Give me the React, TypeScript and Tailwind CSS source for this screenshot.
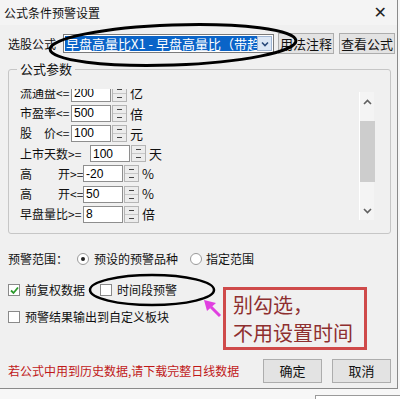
import React from "react";

const font = "font-['SimSun','Noto_Sans_CJK_SC',sans-serif]";

type Row = { label: React.ReactNode; value: string; unit: string; inputLeft: number };

const Spin = () => (
  <div className="flex flex-col w-[15px] h-[17px] border border-[#b5b5b5] bg-[#ececec]">
    <div className="flex-1 flex items-center justify-center border-b border-[#c8c8c8]">
      <div className="w-[5px] h-px bg-[#444]" />
    </div>
    <div className="flex-1 flex items-center justify-center">
      <div className="w-[5px] h-px bg-[#444]" />
    </div>
  </div>
);

const ParamRow = ({ label, value, unit, inputLeft }: Row) => (
  <div className="h-[20.2px] flex items-center">
    <div className="shrink-0 whitespace-nowrap text-[12px] text-[#111]" style={{ width: inputLeft }}>
      {label}
    </div>
    <div className="w-[40px] h-[17px] border border-[#8e8e8e] bg-white flex items-center pl-[2px] text-[12px] text-black leading-none font-['Liberation_Sans',sans-serif]">
      {value}
    </div>
    <div className="ml-[1px]">
      <Spin />
    </div>
    <span className="ml-[3px] text-[13px] text-[#111]">{unit}</span>
  </div>
);

const Check = ({ checked }: { checked?: boolean }) => (
  <div className="w-[12px] h-[12px] border border-[#8a8a8a] bg-white flex items-center justify-center">
    {checked && (
      <svg width="9" height="9" viewBox="0 0 9 9">
        <path d="M1 4.5 L3.5 7 L8 1.5" stroke="#2c9a2c" strokeWidth="1.8" fill="none" />
      </svg>
    )}
  </div>
);

const Radio = ({ checked }: { checked?: boolean }) => (
  <div className="w-[12px] h-[12px] rounded-full border border-[#9a9a9a] bg-white flex items-center justify-center">
    {checked && <div className="w-[4px] h-[4px] rounded-full bg-[#222]" />}
  </div>
);

export default function App() {
  const rows: Row[] = [
    { label: "流通盘<=", value: "200", unit: "亿", inputLeft: 51 },
    { label: "市盈率<=", value: "500", unit: "倍", inputLeft: 51 },
    { label: <span>股<span className="inline-block w-[12px]" />价&lt;=</span>, value: "100", unit: "元", inputLeft: 51 },
    { label: "上市天数>=", value: "100", unit: "天", inputLeft: 70 },
    { label: <span>高<span className="inline-block w-[26px]" />开&gt;=</span>, value: "-20", unit: "%", inputLeft: 63 },
    { label: <span>高<span className="inline-block w-[26px]" />开&lt;=</span>, value: "50", unit: "%", inputLeft: 63 },
    { label: "早盘量比>=", value: "8", unit: "倍", inputLeft: 63 },
  ];

  return (
    <div className={`relative w-[400px] h-[399px] overflow-hidden bg-[#f7f7f7] ${font}`}>
      <div className="w-[398px] h-[389px] bg-[#f0f0f0] border-r border-b border-[#8a8a8a] flex flex-col">
        {/* title bar */}
        <div className="h-[25px] flex items-center justify-between pl-[4px] pr-[10px] bg-[#f4f4f4]">
          <span className="text-[12px] text-[#111]">公式条件预警设置</span>
          <span className="text-[16px] text-[#222] font-['DejaVu_Sans',sans-serif] leading-none">✕</span>
        </div>

        {/* formula select */}
        <div className="mt-[8px] h-[21px] flex items-center pl-[8px]">
          <span className="w-[55px] whitespace-nowrap text-[12px] text-[#111]">选股公式</span>
          <div className="w-[211px] h-[19px] border border-[#7a7a7a] bg-white flex items-center p-[1px]">
            <div className="flex-1 h-full bg-[#0a64c8] text-white text-[13px] leading-[15px] whitespace-nowrap overflow-hidden pl-[1px]">
              早盘高量比X1 - 早盘高量比（带趋势）
            </div>
            <div className="w-[15px] h-full bg-[#dce7f5] border border-[#9fb5d2] flex items-center justify-center">
              <svg width="8" height="6" viewBox="0 0 8 6">
                <path d="M1 1.5 L4 4.5 L7 1.5" stroke="#2a4a7a" strokeWidth="1.6" fill="none" />
              </svg>
            </div>
          </div>
          <button className="ml-[4px] w-[56px] h-[21px] bg-[#e3e3e3] border border-[#adadad] text-[13px] text-[#111] whitespace-nowrap">
            用法注释
          </button>
          <button className="ml-[5px] w-[56px] h-[21px] bg-[#e3e3e3] border border-[#adadad] text-[13px] text-[#111] whitespace-nowrap">
            查看公式
          </button>
        </div>

        {/* group box */}
        <div className="relative mt-[15px] ml-[8px] w-[383px] h-[165px] border border-[#c6c6c6] rounded-[3px]">
          <span className="absolute left-[8px] -top-[9px] px-[3px] bg-[#f0f0f0] text-[13px] leading-[16px] text-[#111]">
            公式参数
          </span>
          <div className="flex mt-[19px] h-[136px]">
            <div className="flex-1 overflow-hidden pl-[11px]">
              <div className="-mt-[6px]">
                {rows.map((r, i) => (
                  <ParamRow key={i} {...r} />
                ))}
              </div>
            </div>
            <div className="mt-[3px] mr-[16px] w-[15px] h-[128px] bg-[#f4f4f4] border-l border-white flex flex-col items-center">
              <svg className="mt-[7px]" width="9" height="6" viewBox="0 0 9 6">
                <path d="M1 5 L4.5 1.5 L8 5" stroke="#606060" strokeWidth="1.6" fill="none" />
              </svg>
              <div className="mt-[16px] w-[15px] h-[61px] bg-[#cdcdcd]" />
              <svg className="mt-[26px]" width="9" height="6" viewBox="0 0 9 6">
                <path d="M1 1 L4.5 4.5 L8 1" stroke="#606060" strokeWidth="1.6" fill="none" />
              </svg>
            </div>
          </div>
        </div>

        {/* range */}
        <div className="mt-[16px] h-[17px] flex items-center pl-[8px] text-[12px] text-[#111] whitespace-nowrap">
          <span>预警范围：</span>
          <div className="ml-[9px]"><Radio checked /></div>
          <span className="ml-[5px]">预设的预警品种</span>
          <div className="ml-[12px]"><Radio /></div>
          <span className="ml-[4px]">指定范围</span>
        </div>

        <div className="mt-[15px] h-[16px] flex items-center pl-[8px] text-[12px] text-[#111] whitespace-nowrap">
          <Check checked />
          <span className="ml-[5px]">前复权数据</span>
          <div className="ml-[15px]"><Check /></div>
          <span className="ml-[5px]">时间段预警</span>
        </div>

        <div className="mt-[11px] h-[16px] flex items-center pl-[8px] text-[12px] text-[#111] whitespace-nowrap">
          <Check />
          <span className="ml-[5px]">预警结果输出到自定义板块</span>
        </div>

        {/* footer */}
        <div className="mt-[34px] flex items-center pl-[8px] pr-[6px]">
          <span className="flex-1 whitespace-nowrap text-[12px] text-[#c01818]">若公式中用到历史数据,请下载完整日线数据</span>
          <button className="w-[59px] h-[24px] bg-[#e3e3e3] border border-[#adadad] text-[13px] text-[#111]">确定</button>
          <button className="ml-[10px] w-[59px] h-[24px] bg-[#e3e3e3] border border-[#adadad] text-[13px] text-[#111]">取消</button>
        </div>
      </div>

      {/* neighbouring window edge */}
      <div className="absolute left-[315px] top-[395px] w-[85px] h-[4px] border-t border-l border-[#9a9a9a] bg-white" />

      {/* annotation: red note box */}
      <div className="absolute left-[223px] top-[287px] w-[144px] h-[63px] border-[3px] border-[#cf4a4a] pl-[7px] pt-[1px] text-[20px] leading-[28px] text-[#8e2f2f] whitespace-nowrap">
        <div>别勾选，</div>
        <div>不用设置时间</div>
      </div>

      {/* annotation: ellipses and arrow */}
      <svg className="absolute inset-0 pointer-events-none" width="400" height="399" viewBox="0 0 400 399">
        <ellipse cx="173" cy="45" rx="123" ry="20" transform="rotate(-2 173 45)" stroke="#000" strokeWidth="3" fill="none" />
        <ellipse cx="152" cy="290" rx="62" ry="15" stroke="#000" strokeWidth="2.5" fill="none" />
        <path d="M220 316 L211 307" stroke="#e040e0" strokeWidth="3" />
        <path d="M204 300 L216 303 L207 311 Z" fill="#e040e0" />
      </svg>
    </div>
  );
}
